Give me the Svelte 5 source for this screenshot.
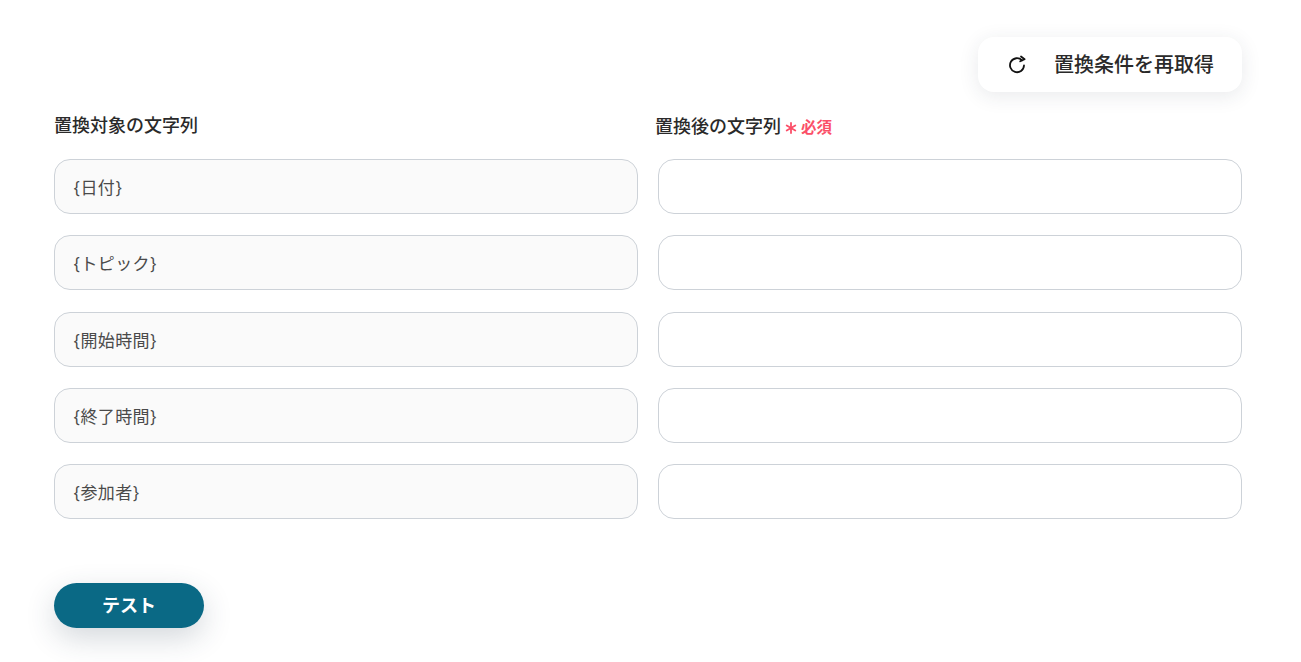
<script>
  const rows = ['{日付}', '{トピック}', '{開始時間}', '{終了時間}', '{参加者}'];
</script>

<main class="page">
  <div class="toolbar">
    <button class="refresh" type="button">
      <svg class="icon" viewBox="0 0 24 24" width="24" height="24" fill="none" stroke="currentColor" stroke-width="1.8" stroke-linecap="round" stroke-linejoin="round">
        <path d="M17 8.3A7 7 0 1 0 19 13.5" />
        <path d="M16 4.5l3.6 2.8-4.4 2" />
      </svg>
      <span>置換条件を再取得</span>
    </button>
  </div>

  <div class="grid">
    <div class="label">置換対象の文字列</div>
    <div class="label right">
      置換後の文字列
      <span class="required">
        <svg class="star" viewBox="0 0 12 12" width="12" height="12" fill="none" stroke="currentColor" stroke-width="1.8" stroke-linecap="round">
          <path d="M6 1v10M1.7 3.5l8.6 5M10.3 3.5l-8.6 5" />
        </svg>
        必須
      </span>
    </div>

    {#each rows as row}
      <input class="field readonly" type="text" value={row} readonly />
      <input class="field" type="text" />
    {/each}
  </div>

  <button class="test" type="button">テスト</button>
</main>

<style>
  :global(body) {
    background: #fff;
    font-family: Inter, 'Noto Sans CJK JP', sans-serif;
    color: #2a2a2a;
  }

  .page {
    box-sizing: border-box;
    height: 662px;
    padding: 37px 59px 0 54px;
    overflow: hidden;
  }

  .toolbar {
    display: flex;
    justify-content: flex-end;
  }

  .refresh {
    display: flex;
    align-items: center;
    gap: 25px;
    width: 264px;
    height: 55px;
    padding: 0 0 2px 27px;
    border: none;
    border-radius: 16px;
    background: #fff;
    box-shadow: 0 4px 20px rgba(40, 50, 70, 0.1);
    color: #2a2a2a;
    font-family: inherit;
    font-size: 20px;
    font-weight: 500;
  }

  .icon {
    color: #111;
    flex: none;
  }

  .grid {
    display: grid;
    grid-template-columns: 584px 584px;
    column-gap: 20px;
    row-gap: 21.25px;
    margin-top: 21px;
  }

  .label {
    height: 26px;
    margin-bottom: -1.25px;
    font-size: 18px;
    font-weight: 500;
    line-height: 26px;
    white-space: nowrap;
  }

  .label.right {
    display: flex;
    align-items: center;
    margin-top: 1px;
    margin-bottom: -2.25px;
    margin-left: -3px;
  }

  .required {
    display: flex;
    align-items: center;
    margin: 1px 0 0 4px;
    color: #fb4f68;
    font-size: 15.5px;
    font-weight: 700;
  }

  .star {
    margin: 1px 4px 0 0;
  }

  .field {
    box-sizing: border-box;
    width: 100%;
    height: 55px;
    padding: 0 18px;
    border: 1px solid #cdd2d8;
    border-radius: 16px;
    background: #fff;
    color: #4a4a4a;
    font-family: inherit;
    font-size: 17px;
    letter-spacing: 0.3px;
    outline: none;
  }

  .field.readonly {
    background: #fafafa;
  }

  .test {
    display: block;
    width: 150px;
    height: 45px;
    margin-top: 64px;
    padding: 0 0 3px;
    border: none;
    border-radius: 23px;
    background: #0a6985;
    box-shadow: 0 10px 30px rgba(40, 60, 80, 0.2);
    color: #fff;
    font-family: inherit;
    font-size: 18px;
    font-weight: 700;
  }
</style>
